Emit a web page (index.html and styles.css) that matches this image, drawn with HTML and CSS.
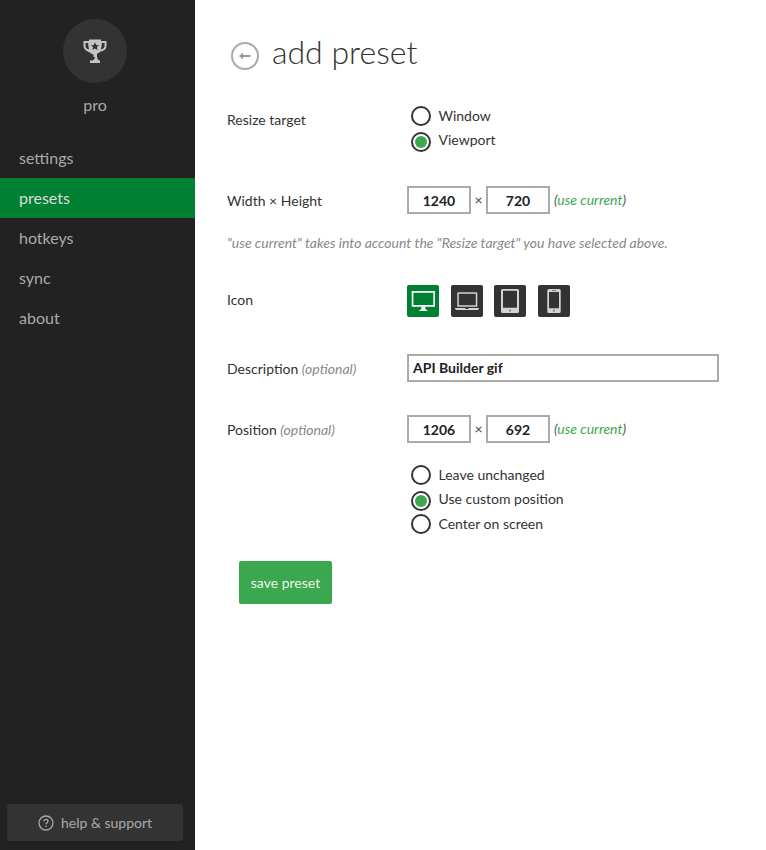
FILE: index.html
```html
<!DOCTYPE html>
<html lang="en">
<head>
<meta charset="utf-8">
<title>add preset</title>
<link rel="stylesheet" href="styles.css">
</head>
<body>
<div class="app">
  <aside class="sidebar">
    <div class="avatar">
      <svg class="trophy" width="24" height="24" viewBox="0 0 24 24">
        <path fill="#c4c4c4" fill-rule="evenodd" d="M6 .5h12v1.500h5.500v5c0 3-2.500 5-6 5.600-.9 1-2 1.700-3.500 2V18c.3 1.800 1.200 2.800 2.500 3.500H17v2.500H7v-2.500h2.500c1.300-.7 2.200-1.700 2.500-3.500H10.500v-2.400c-1.500-.3-2.600-1-3.500-2C3 12 .5 10 .5 7V2H6V.5zM2.500 4v3c0 1.700 1.300 3 3.800 3.600C5.500 9 5.200 6.500 5.200 4H2.500zm16.300 0c0 2.500-.3 5-1.100 6.600 2.500-.6 3.800-1.900 3.800-3.600V4h-2.700z"/>
        <path fill="#333" d="M12 3.300l1.200 2.600 2.800.3-2.100 1.900.6 2.800-2.500-1.400-2.500 1.400.6-2.800-2.100-1.900 2.800-.3z"/>
      </svg>
    </div>
    <div class="plan">pro</div>
    <nav class="nav">
      <a class="nav-item">settings</a>
      <a class="nav-item active">presets</a>
      <a class="nav-item">hotkeys</a>
      <a class="nav-item">sync</a>
      <a class="nav-item">about</a>
    </nav>
    <button class="help" type="button">
      <svg width="16" height="16" viewBox="0 0 16 16">
        <circle cx="8" cy="8" r="7" fill="none" stroke="#aaa" stroke-width="1.300"/>
        <path d="M6 6.300c0-1.200.9-1.900 2-1.900s2 .7 2 1.800c0 1.500-2 1.500-2 3" fill="none" stroke="#aaa" stroke-width="1.300"/>
        <rect x="7.300" y="10.500" width="1.400" height="1.400" fill="#aaa"/>
      </svg>
      <span>help &amp; support</span>
    </button>
  </aside>

  <main class="main">
    <header class="title">
      <svg class="back" width="30" height="30" viewBox="0 0 30 30">
        <circle cx="15" cy="15" r="13" fill="none" stroke="#aaa" stroke-width="2"/>
        <path d="M10 15h10.500" stroke="#999" stroke-width="2" fill="none"/>
        <path d="M13 11.500L9 15l4 3.500z" fill="#999"/>
      </svg>
      <h1>add preset</h1>
    </header>

    <section class="row row-target">
      <div class="label">Resize target</div>
      <div class="radios">
        <label class="radio"><span class="dot"></span>Window</label>
        <label class="radio"><span class="dot on"></span>Viewport</label>
      </div>
    </section>

    <section class="row row-size">
      <div class="label">Width × Height</div>
      <div class="dims">
        <span class="box w">1240</span><span class="times">×</span><span class="box h">720</span>
        <span class="use">(<em>use current</em>)</span>
      </div>
    </section>

    <p class="note">"use current" takes into account the "Resize target" you have selected above.</p>

    <section class="row row-icon">
      <div class="label">Icon</div>
      <div class="icons">
        <span class="tile sel">
          <svg width="32" height="32" viewBox="0 0 32 32"><path fill="#fff" fill-rule="evenodd" d="M4.700 6h23.300v15.700H4.700zM6.400 7.700v12.300h19.900V7.700z"/><path d="M14.500 21.700h3.700l.4 2.600 2.400 1.700H11.600l2.500-1.700z" fill="#fff"/></svg>
        </span>
        <span class="tile">
          <svg width="32" height="32" viewBox="0 0 32 32"><path fill="#d4d4d4" fill-rule="evenodd" d="M7.300 7.300h18a1 1 0 0 1 1 1v13.400h-20V8.300a1 1 0 0 1 1-1zM7.800 8.800v11.500h17V8.800z"/><path fill="#d4d4d4" d="M4 23h10.500v.9h3V23H28v.9l-1.500 1H5.500l-1.500-1z"/></svg>
        </span>
        <span class="tile">
          <svg width="32" height="32" viewBox="0 0 32 32"><path fill="#d4d4d4" fill-rule="evenodd" d="M8.500 4h15A1.500 1.500 0 0 1 25 5.500v21a1.500 1.500 0 0 1-1.500 1.500h-15A1.500 1.500 0 0 1 7 26.500v-21A1.500 1.500 0 0 1 8.500 4zM9 5.700v17h14v-17z"/><rect x="15" y="24.500" width="2" height="2" fill="#888"/></svg>
        </span>
        <span class="tile">
          <svg width="32" height="32" viewBox="0 0 32 32"><path fill="#d4d4d4" fill-rule="evenodd" d="M10.800 4h10.400a1.500 1.500 0 0 1 1.500 1.500v21a1.500 1.500 0 0 1-1.500 1.500H10.800a1.500 1.500 0 0 1-1.500-1.500v-21A1.500 1.500 0 0 1 10.800 4zM11 7v16.300h10V7z"/><rect x="13.800" y="5" width="4.400" height="1" fill="#777"/><rect x="15" y="24.600" width="2" height="2" fill="#888"/></svg>
        </span>
      </div>
    </section>

    <section class="row row-desc">
      <div class="label">Description <i>(optional)</i></div>
      <div class="text-box">API Builder gif</div>
    </section>

    <section class="row row-pos">
      <div class="label">Position <i>(optional)</i></div>
      <div class="dims">
        <span class="box w">1206</span><span class="times">×</span><span class="box h">692</span>
        <span class="use">(<em>use current</em>)</span>
      </div>
    </section>

    <div class="radios radios-pos">
      <label class="radio"><span class="dot"></span>Leave unchanged</label>
      <label class="radio"><span class="dot on"></span>Use custom position</label>
      <label class="radio"><span class="dot"></span>Center on screen</label>
    </div>

    <button class="save" type="button">save preset</button>
  </main>
</div>
</body>
</html>
```

FILE: styles.css
```css
* { box-sizing: border-box; }
html, body { margin: 0; height: 100%; }
body { font-family: Lato, sans-serif; color: #333; background: #fff; }
.app { display: flex; height: 850px; overflow: hidden; }

.sidebar { width: 195px; flex: none; background: #222; display: flex; flex-direction: column; align-items: stretch; padding-top: 19px; }
.avatar { width: 64px; height: 64px; border-radius: 50%; background: #333; margin-left: 63px; display: flex; align-items: center; justify-content: center; }
.plan { width: 190px; text-align: center; color: #aaa; font-size: 16px; line-height: 20px; margin-top: 12px; }
.nav { margin-top: 23px; display: flex; flex-direction: column; }
.nav-item { height: 40px; line-height: 40px; padding-left: 19px; font-size: 16px; color: #aaa; }
.nav-item.active { background: #008033; color: #ddd; }
.help { margin: auto 12px 9px 7px; height: 37px; background: #333; border: 0; border-radius: 3px; color: #aaa; font: 14px Lato, sans-serif; display: flex; align-items: center; justify-content: center; gap: 7px; padding: 0; }

.main { flex: 1; padding-left: 32px; display: flex; flex-direction: column; align-items: flex-start; }
.title { display: flex; align-items: flex-start; margin-top: 31px; height: 43px; }
.back { margin-left: 3px; margin-top: 10px; }
h1 { margin: 0 0 0 12px; font-weight: 300; font-size: 32px; line-height: 42px; color: #333; }

.row { display: flex; align-items: center; width: 100%; }
.label { width: 180px; flex: none; font-size: 14px; color: #333; }
.label i { color: #888; }

.row-target { margin-top: 29px; align-items: flex-start; }
.row-target .label { padding-top: 8px; line-height: 18px; }
.radios { display: flex; flex-direction: column; margin-left: 4px; }
.radio { display: flex; align-items: center; height: 24.500px; font-size: 14px; color: #333; }
.dot { width: 20px; height: 20px; border: 2px solid #333; border-radius: 50%; margin-right: 7.500px; margin-top: 1px; display: flex; align-items: center; justify-content: center; background: #fff; }
.dot.on { margin-top: 4px; }
.dot.on::after { content: ""; width: 12px; height: 12px; border-radius: 50%; background: #3ba74f; }

.row-size { margin-top: 34px; }
.dims { display: flex; align-items: center; }
.box { height: 28px; border: 2px solid #aaa; font-size: 14px; font-weight: 700; color: #222; display: flex; align-items: center; justify-content: center; }
.box.w { width: 64px; }
.box.h { width: 64px; }
.times { width: 15px; text-align: center; font-size: 14px; color: #444; margin-bottom: 1px; }
.use { margin-left: 4px; margin-bottom: 2px; font-size: 14px; color: #555; font-style: italic; }
.use em { color: #3ba74f; }

.note { margin: 21px 0 0; font-size: 14px; font-style: italic; color: #888; line-height: 16px; }

.row-icon { margin-top: 34px; }
.row-icon .label { padding-bottom: 4px; }
.icons { display: flex; gap: 11.670px; }
.tile { width: 32px; height: 32px; background: #333; border-radius: 2px; display: block; }
.tile svg { display: block; }
.tile.sel { background: #008033; }

.row-desc { margin-top: 37px; }
.text-box { width: 312px; height: 28px; border: 2px solid #aaa; font-size: 14px; font-weight: 700; color: #222; padding-left: 4px; line-height: 24px; }

.row-pos { margin-top: 33px; }
.radios-pos { margin-left: 184px; margin-top: 19px; }

.save { margin: 25px 0 0 12px; width: 93px; height: 43px; background: #3ba74f; border: 0; border-radius: 2px; color: #e8f5ea; font: 14px Lato, sans-serif; padding: 0; }
```
